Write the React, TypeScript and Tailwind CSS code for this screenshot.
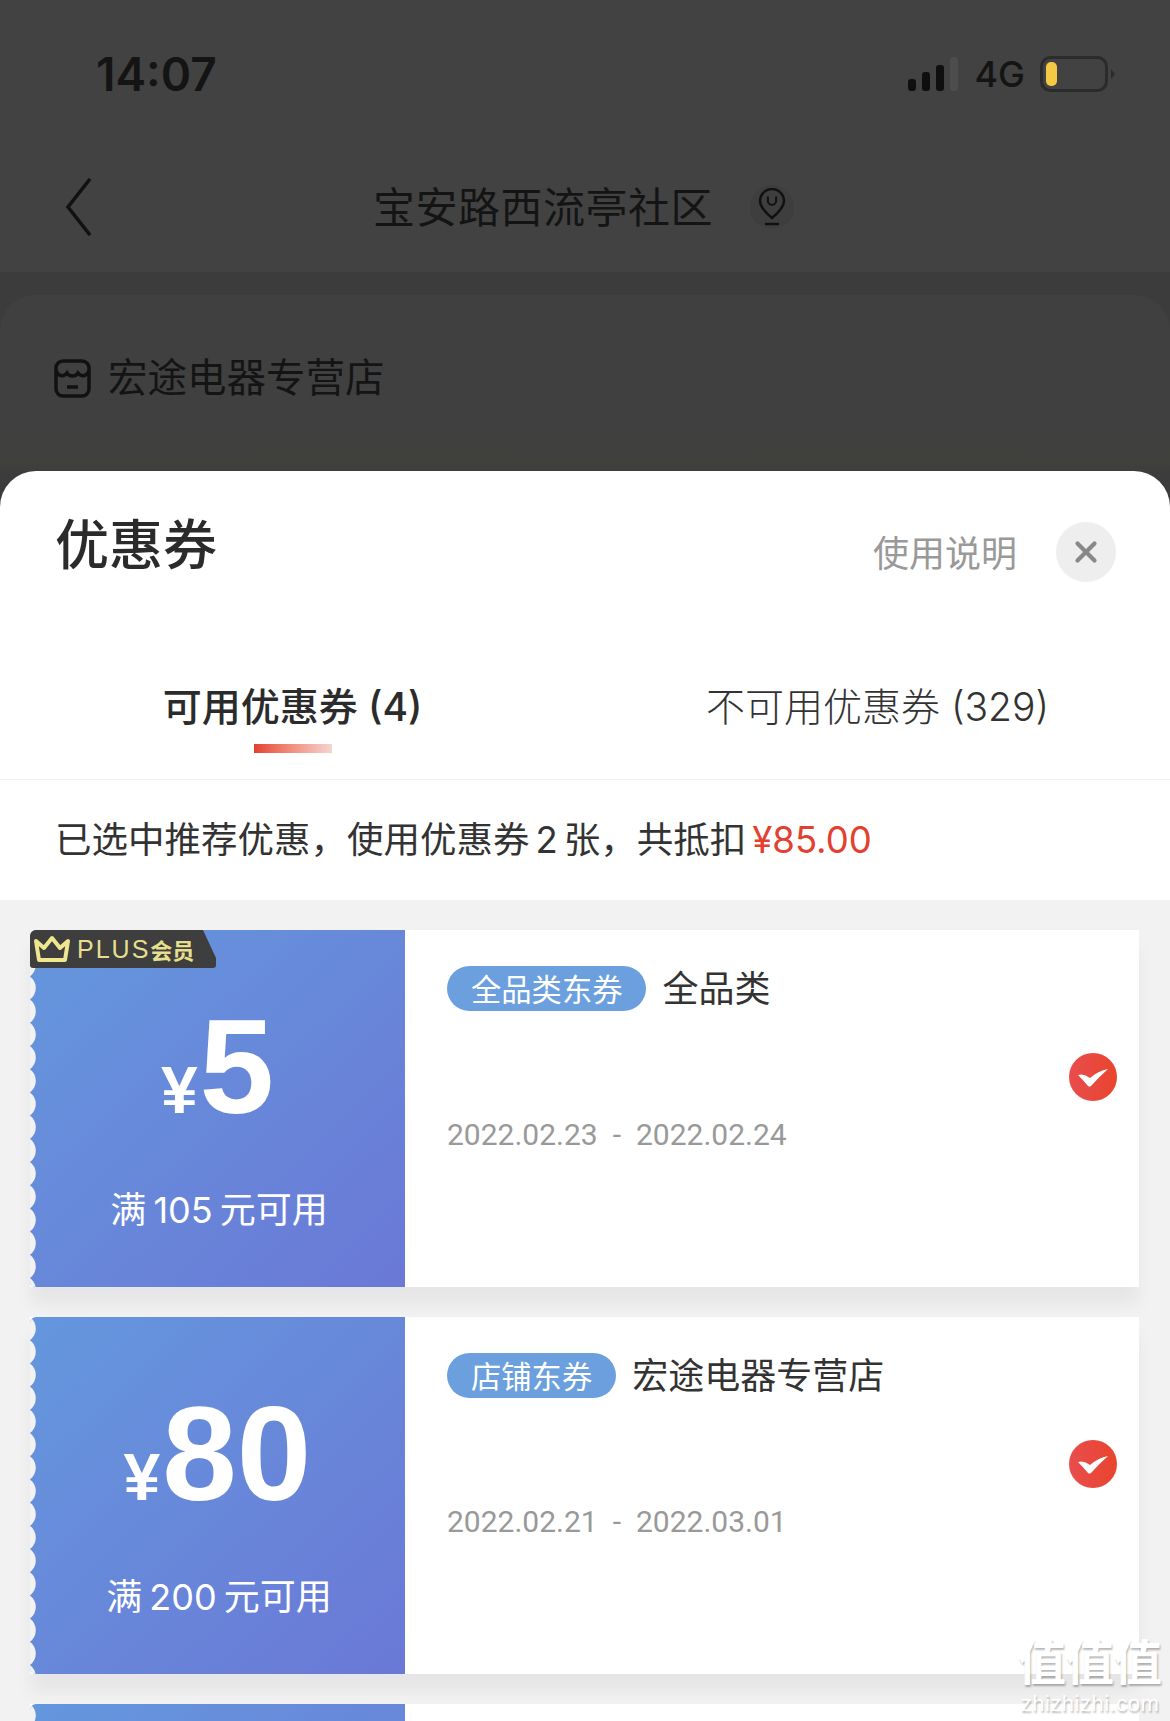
import { X } from "lucide-react";

const cjk = "font-['Inter','Noto_Sans_CJK_SC',sans-serif]";

type Coupon = {
  amount: string;
  limit: string;
  tag: string;
  scope: string;
  start: string;
  end: string;
  plus?: boolean;
};

const coupons: Coupon[] = [
  {
    amount: "5",
    limit: "105",
    tag: "全品类东券",
    scope: "全品类",
    start: "2022.02.23",
    end: "2022.02.24",
    plus: true,
  },
  {
    amount: "80",
    limit: "200",
    tag: "店铺东券",
    scope: "宏途电器专营店",
    start: "2022.02.21",
    end: "2022.03.01",
  },
];

// gray bites along the left edge of the blue panel
const Scallops = () => {
  let d = "";
  for (let i = 0; i < 16; i++) {
    const y = i * 23.2;
    d += `M0 ${y} A14.5 14.5 0 0 1 0 ${y + 23.2} Z `;
  }
  return (
    <svg width="7" height="372" viewBox="0 0 7 372" className="absolute left-0 top-0">
      <path d={d} fill="#f2f2f2" />
    </svg>
  );
};

const PlusBadge = () => (
  <div className="absolute left-0 top-0 flex h-[38px] w-[186px] items-center rounded-b-[3px] bg-[#3e3e3e] pl-[3px] [clip-path:polygon(0_0,173px_0,186px_28px,186px_38px,0_38px)]">
    <svg width="38" height="28" viewBox="0 0 38 28" fill="none" stroke="#efe78f" strokeWidth="4" strokeLinejoin="round">
      <path d="M3 6l8 7 8-10 8 10 8-7-3 19H6z" />
    </svg>
    <span className="ml-[6px] font-['Liberation_Sans',sans-serif] text-[25px] leading-none tracking-[2px] text-[#e6df8d]">
      PLUS
    </span>
    <span className="font-['Noto_Sans_CJK_SC',sans-serif] text-[22px] font-bold leading-none text-[#e6df8d]">
      会员
    </span>
  </div>
);

const CheckBadge = () => (
  <div className="flex h-[48px] w-[48px] items-center justify-center rounded-full bg-gradient-to-r from-[#e94c4c] to-[#e8452c]">
    <svg width="48" height="48" viewBox="0 0 48 48" fill="#fff">
      <path d="M9 22Q15 20 21 25Q29 18 39 16Q30 24 22 33Q20 34 19 33Q14 27 9 22z" />
    </svg>
  </div>
);

const CouponCard = ({ amount, limit, tag, scope, start, end, plus }: Coupon) => (
  <div className="flex h-[357px] shrink-0 bg-white shadow-[0_18px_16px_rgba(0,0,0,0.05)]">
    <div className="relative flex w-[375px] shrink-0 flex-col items-center overflow-hidden rounded-l-[6px] bg-gradient-to-br from-[#6497dd] to-[#6a78d6] pt-[70px] text-white">
      <Scallops />
      {plus && <PlusBadge />}
      <div className="flex items-baseline gap-[2px] font-['Liberation_Sans',sans-serif] font-bold">
        <span className="text-[66px] leading-none">¥</span>
        <span className="text-[134px] leading-none">{amount}</span>
      </div>
      <p className={`${cjk} ml-[3px] mt-[58px] flex text-[36px] leading-none`}>
        <span>满</span>
        <span className="mx-[7px]">{limit}</span>
        <span>元可用</span>
      </p>
    </div>
    <div className="flex flex-1 items-start justify-between pl-[42px] pr-[22px]">
      <div className="pt-[36px]">
        <div className="flex items-center gap-[16px]">
          <span className={`${cjk} flex h-[45px] items-center rounded-full bg-[#6b9fdd] px-[24px] pt-[3px] text-[30.3px] leading-none text-white`}>
            {tag}
          </span>
          <span className={`${cjk} pt-[1px] text-[36px] leading-none text-[#333]`}>{scope}</span>
        </div>
        <p className="mt-[109px] flex gap-[15px] font-['Roboto',sans-serif] text-[30px] leading-none text-[#999]">
          <span>{start}</span>
          <span>-</span>
          <span>{end}</span>
        </p>
      </div>
      <div className="mt-[123px]">
        <CheckBadge />
      </div>
    </div>
  </div>
);

const App = () => {
  return (
    <div className={`${cjk} relative h-[1721px] w-[1170px] overflow-hidden bg-[#3c3c3c]`}>
      {/* Dimmed page behind the sheet */}
      <div className="flex h-[471px] flex-col text-[#141414]">
        <div className="flex h-[148px] items-center justify-between bg-[#424242] pl-[96px] pr-[54px]">
          <span className="text-[46px] font-semibold leading-none">14:07</span>
          <div className="flex items-center">
            <svg width="52" height="34" viewBox="0 0 52 34" fill="#0f0f0f">
              <rect x="1" y="22" width="8" height="12" rx="3" />
              <rect x="15" y="15" width="8" height="19" rx="3" />
              <rect x="29" y="8" width="8" height="26" rx="3" />
              <rect x="43" y="0" width="8" height="34" rx="3" fill="#4d4d4d" />
            </svg>
            <span className="ml-[15px] text-[36px] font-medium leading-none">4G</span>
            <svg width="76" height="36" viewBox="0 0 76 36" fill="none" className="ml-[15px]">
              <rect x="1.500" y="1.500" width="65" height="33" rx="9" stroke="#2b2b2b" strokeWidth="3" />
              <rect x="6" y="6" width="11" height="24" rx="5" fill="#f6c945" />
              <path d="M71 13l4 5-4 5z" fill="#2b2b2b" />
            </svg>
          </div>
        </div>

        <div className="flex h-[124px] items-start bg-[#424242] pl-[65px] pt-[30px]">
          <svg width="27" height="58" viewBox="0 0 27 58" fill="none" stroke="#111" strokeWidth="3.500" className="shrink-0">
            <path d="M25 1L3 29l22 28" />
          </svg>
          <span className="ml-[281px] mt-[9px] text-[42px] leading-none tracking-[0.5px]">宝安路西流亭社区</span>
          <div className="ml-[37px] mt-[7px] flex h-[44px] w-[44px] items-center justify-center rounded-full bg-[#3e3e3e]">
            <svg width="28" height="38" viewBox="0 0 28 38" fill="none" stroke="#111" strokeWidth="2.500" strokeLinecap="round">
              <path d="M14 30C8 25 2 19 2 13a12 12 0 0 1 24 0c0 6-6 12-12 17z" />
              <path d="M9 9v4a5 5 0 0 0 10 0V9" transform="translate(2.500 2) scale(.82)" />
              <path d="M8 36h12" />
            </svg>
          </div>
        </div>

        <div className="mt-[23px] flex-1 rounded-t-[36px] bg-gradient-to-b from-[#404040] from-80% to-[#3f3f3a] pl-[54px] pt-[64px]">
          <div className="flex items-center">
            <svg width="37" height="39" viewBox="0 0 37 39" fill="none" stroke="#111" strokeWidth="3.500">
              <rect x="2" y="2" width="33" height="35" rx="7" />
              <path d="M2 12c3 6 8 6 11 2 2 4 9 4 11 0 3 4 8 4 11-2" />
              <path d="M13 28h11" />
            </svg>
            <span className="ml-[17px] text-[39.5px] leading-none">宏途电器专营店</span>
          </div>
        </div>
      </div>

      {/* Coupon sheet */}
      <div className="flex h-[1250px] flex-col overflow-hidden rounded-t-[36px] bg-white">
        <div className="flex h-[150px] shrink-0 items-start justify-between pl-[55px] pr-[54px]">
          <h1 className="mt-[48px] text-[54px] font-medium leading-none text-[#2b2b2b]">优惠券</h1>
          <div className="mt-[51px] flex items-center gap-[39px]">
            <span className="mt-[3px] text-[36px] leading-none text-[#999]">使用说明</span>
            <div className="flex h-[60px] w-[60px] items-center justify-center rounded-full bg-[#eeeeee]">
              <X size={34} strokeWidth={3} color="#888" />
            </div>
          </div>
        </div>

        <div className="grid h-[159px] shrink-0 grid-cols-2 border-b border-[#f3f3f3]">
          <div className="flex flex-col items-center pt-[66px]">
            <span className="text-[39px] font-medium leading-none text-[#2b2b2b]">可用优惠券 (4)</span>
            <div className="mt-[18px] h-[9px] w-[78px] bg-gradient-to-r from-[#e23f2d] to-[#f4d5d1]" />
          </div>
          <div className="flex justify-center pt-[66px]">
            <span className="text-[39px] font-light leading-none text-[#333]">不可用优惠券 (329)</span>
          </div>
        </div>

        <div className="flex h-[120px] shrink-0 items-center pl-[55px] text-[36.5px] leading-none text-[#333]">
          <span>已选中推荐优惠，使用优惠券</span>
          <span className="mx-[6px]">2</span>
          <span>张，共抵扣</span>
          <span className="ml-[6px] text-[#e2412f]">¥85.00</span>
        </div>

        <div className="flex flex-1 flex-col gap-[30px] overflow-hidden bg-[#f2f2f2] pl-[30px] pr-[31px] pt-[30px]">
          {coupons.map((c) => (
            <CouponCard key={c.amount} {...c} />
          ))}
          <div className="flex h-[357px] shrink-0 bg-white">
            <div className="relative w-[375px] shrink-0 overflow-hidden rounded-l-[6px] bg-gradient-to-br from-[#6497dd] to-[#6a78d6]">
              <Scallops />
            </div>
          </div>
        </div>
      </div>

      {/* Site watermark */}
      <div className="absolute bottom-[6px] right-[8px] flex flex-col items-center text-white [text-shadow:1px_2px_2px_rgba(0,0,0,0.28)]">
        <span className="text-[48px] font-bold leading-none">值值值</span>
        <span className="mt-[6px] font-['Liberation_Sans',sans-serif] text-[22px] leading-none tracking-[0.5px]">zhizhizhi.com</span>
      </div>
    </div>
  );
};

export default App;
